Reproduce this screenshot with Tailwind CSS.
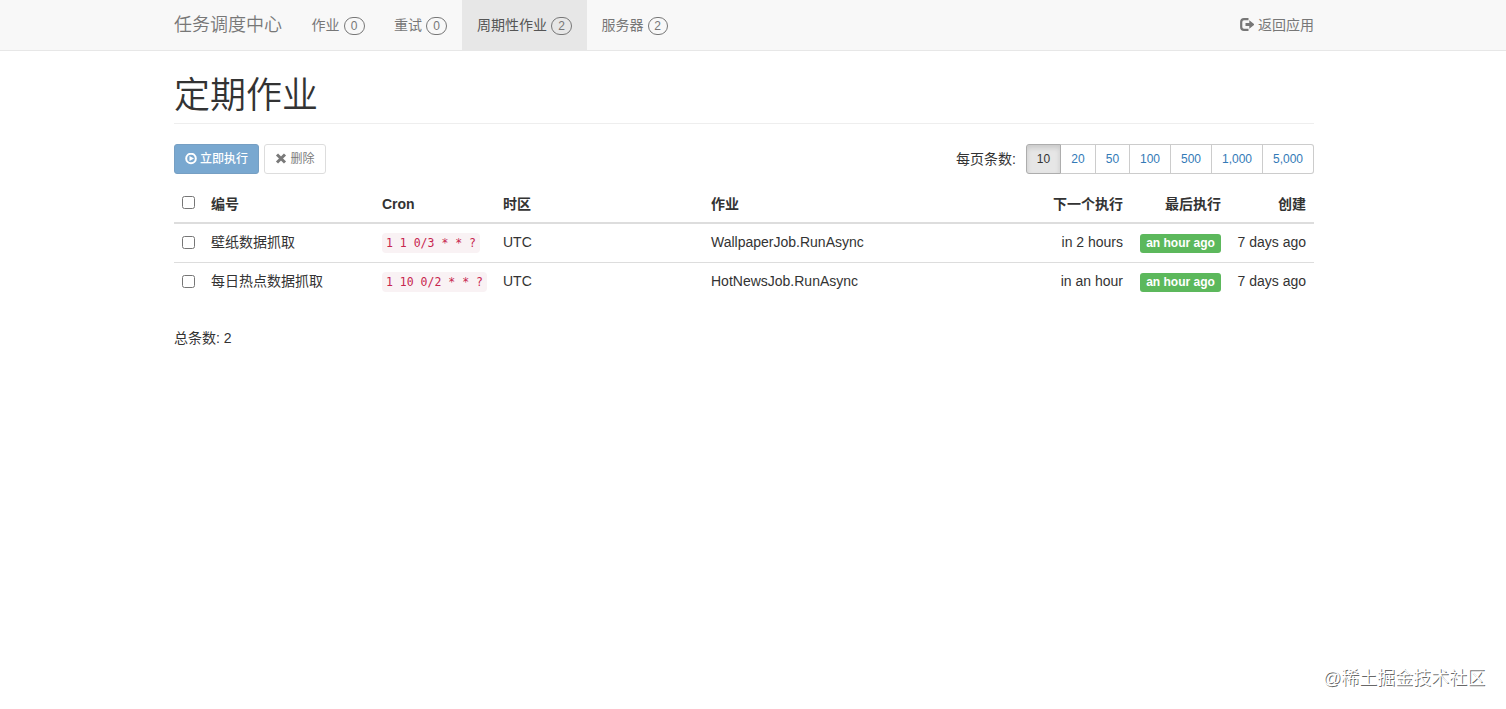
<!DOCTYPE html>
<html lang="zh-CN">
<head>
    <meta charset="UTF-8">
    <meta name="viewport" content="width=device-width, initial-scale=1.0">
    <title>定期作业</title>
    <script src="https://cdn.jsdelivr.net/npm/@tailwindcss/browser@4"></script>
</head>
<body class="h-screen overflow-hidden bg-white font-['Liberation_Sans','Noto_Sans_CJK_SC',sans-serif] text-sm leading-5 text-[#333]">
    <!-- Navbar -->
    <nav class="h-[51px] border-b border-[#e7e7e7] bg-[#f8f8f8] text-[#777]">
        <div class="ml-[174px] flex h-[50px] w-[1140px] items-stretch">
            <a href="#" class="mr-[15px] flex w-[108px] items-center text-lg leading-5 font-[350] whitespace-nowrap">任务调度中心</a>
            <a href="#" class="flex w-[82px] items-center justify-center gap-1">作业
                <span class="mt-0.5 flex h-[18px] w-[21px] items-center justify-center rounded-[10px] border border-[#777] text-xs leading-3">0</span>
            </a>
            <a href="#" class="flex w-[83px] items-center justify-center gap-1">重试
                <span class="mt-0.5 flex h-[18px] w-[21px] items-center justify-center rounded-[10px] border border-[#777] text-xs leading-3">0</span>
            </a>
            <a href="#" class="flex w-[125px] items-center justify-center gap-1 bg-[#e7e7e7] text-[#555]">周期性作业
                <span class="mt-0.5 flex h-[18px] w-[21px] items-center justify-center rounded-[10px] border border-[#777] text-xs leading-3 text-[#777]">2</span>
            </a>
            <a href="#" class="flex w-[95px] items-center justify-center gap-1">服务器
                <span class="mt-0.5 flex h-[18px] w-5 items-center justify-center rounded-[10px] border border-[#777] text-xs leading-3">2</span>
            </a>
            <a href="#" class="ml-auto flex items-center gap-1">
                <svg class="h-3.5 w-3.5" viewBox="0 0 14 14" fill="none">
                    <path d="M8.500 1.200H4Q1.200 1.200 1.200 4V9Q1.200 11.800 4 11.800H8.500" stroke="currentColor" stroke-width="2.200"/>
                    <path d="M5.500 5H9.300V2.300L14.500 6.500L9.300 10.700V8H5.500Z" fill="currentColor"/>
                </svg>返回应用
            </a>
        </div>
    </nav>

    <!-- Main Content -->
    <main class="ml-[174px] w-[1140px]">
        <h1 class="mb-5 h-[73px] border-b border-[#eee] pt-[25px] text-4xl leading-10 font-[350]">定期作业</h1>

        <!-- Toolbar -->
        <div class="flex h-[30px] items-center text-xs leading-[18px]">
            <button class="mr-[5px] flex h-[30px] w-[85px] items-center justify-center gap-[3px] rounded-[3px] border border-[#2e6da4] bg-[#337ab7] text-white opacity-65">
                <svg class="h-3 w-3" viewBox="0 0 12 12" fill="none">
                    <circle cx="6" cy="5.500" r="4.800" stroke="currentColor" stroke-width="2"/>
                    <path d="M4.500 2.900L9 5.500L4.500 8.100Z" fill="currentColor"/>
                </svg><span class="font-medium">立即执行</span>
            </button>
            <button class="flex h-[30px] w-[62px] items-center justify-center gap-[3px] rounded-[3px] border border-[#ccc] bg-white opacity-65">
                <svg class="h-3 w-3" viewBox="0 0 12 12" fill="none">
                    <path d="M2 1.500L10 9.500M10 1.500L2 9.500" stroke="currentColor" stroke-width="3"/>
                </svg>删除
            </button>
            <span class="mr-[10px] ml-auto text-sm leading-5">每页条数:</span>
            <div class="flex h-[30px] text-[#337ab7]">
                <a href="#" class="flex w-[35px] items-center justify-center rounded-l-[3px] border border-[#adadad] bg-[#e6e6e6] text-[#333] inset-shadow-[0_3px_5px_rgba(0,0,0,0.125)]">10</a>
                <a href="#" class="flex w-[35px] items-center justify-center border-y border-r border-[#ccc]">20</a>
                <a href="#" class="flex w-[34px] items-center justify-center border-y border-r border-[#ccc]">50</a>
                <a href="#" class="flex w-[41px] items-center justify-center border-y border-r border-[#ccc]">100</a>
                <a href="#" class="flex w-[41px] items-center justify-center border-y border-r border-[#ccc]">500</a>
                <a href="#" class="flex w-[51px] items-center justify-center border-y border-r border-[#ccc]">1,000</a>
                <a href="#" class="flex w-[51px] items-center justify-center rounded-r-[3px] border-y border-r border-[#ccc]">5,000</a>
            </div>
        </div>

        <!-- Recurring jobs -->
        <table class="mt-3 w-full table-fixed border-separate border-spacing-0">
            <colgroup>
                <col class="w-[29px]">
                <col class="w-[171px]">
                <col class="w-[121px]">
                <col class="w-[208px]">
                <col>
                <col class="w-[110px]">
                <col class="w-[98px]">
                <col class="w-[85px]">
            </colgroup>
            <thead>
                <tr class="h-[38px] text-left [&>th]:border-b-2 [&>th]:border-[#ddd] [&>th]:px-2">
                    <th><input type="checkbox" class="mb-[3px] block h-[13px] w-[13px]"></th>
                    <th>编号</th>
                    <th>Cron</th>
                    <th>时区</th>
                    <th>作业</th>
                    <th class="text-right">下一个执行</th>
                    <th class="text-right">最后执行</th>
                    <th class="text-right">创建</th>
                </tr>
            </thead>
            <tbody>
                <tr class="h-[39px] [&>td]:border-b [&>td]:border-[#ddd] [&>td]:px-2 [&>td]:pb-0.5">
                    <td><input type="checkbox" class="block h-[13px] w-[13px]"></td>
                    <td>壁纸数据抓取</td>
                    <td class="whitespace-nowrap"><code class="rounded bg-[#f9f2f4] px-1 py-[3px] font-['DejaVu_Sans_Mono',monospace] text-[11.5px] text-[#c7254e]">1 1 0/3 * * ?</code></td>
                    <td>UTC</td>
                    <td>WallpaperJob.RunAsync</td>
                    <td class="text-right">in 2 hours</td>
                    <td><span class="mt-0.5 ml-auto block h-[19px] w-[81px] rounded-[3px] bg-[#5cb85c] text-center text-xs leading-[18px] font-bold text-white">an hour ago</span></td>
                    <td class="text-right">7 days ago</td>
                </tr>
                <tr class="h-[38px] [&>td]:px-2 [&>td]:pb-0.5">
                    <td><input type="checkbox" class="block h-[13px] w-[13px]"></td>
                    <td>每日热点数据抓取</td>
                    <td class="whitespace-nowrap"><code class="rounded bg-[#f9f2f4] px-1 py-[3px] font-['DejaVu_Sans_Mono',monospace] text-[11.5px] text-[#c7254e]">1 10 0/2 * * ?</code></td>
                    <td>UTC</td>
                    <td>HotNewsJob.RunAsync</td>
                    <td class="text-right">in an hour</td>
                    <td><span class="mt-0.5 ml-auto block h-[19px] w-[81px] rounded-[3px] bg-[#5cb85c] text-center text-xs leading-[18px] font-bold text-white">an hour ago</span></td>
                    <td class="text-right">7 days ago</td>
                </tr>
            </tbody>
        </table>

        <p class="mt-[27px]">总条数: 2</p>
    </main>

    <!-- Watermark -->
    <div class="absolute right-[21px] bottom-[19px] text-lg leading-6 font-[350] text-white text-shadow-[1px_1px_0_rgb(0_0_0/0.6)]">@稀土掘金技术社区</div>
</body>
</html>
